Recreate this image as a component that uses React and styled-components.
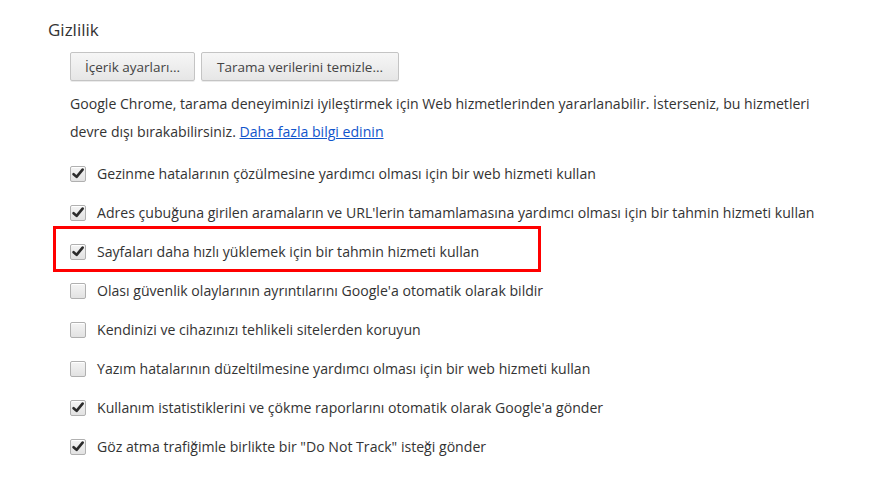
import React from "react";
import styled, { createGlobalStyle } from "styled-components";

const Global = createGlobalStyle`
  html, body { margin: 0; padding: 0; background: #fff; }
  body { font-family: "Open Sans", "Noto Sans", sans-serif; color: #333; }
`;

const Page = styled.div`
  width: 876px;
  height: 478px;
  box-sizing: border-box;
  padding: 18px 0 0 48px;
  background: #fff;
`;

const Heading = styled.h3`
  margin: 0;
  font-size: 17px;
  font-weight: 400;
  color: #333;
  line-height: 24px;
`;

const Body = styled.div`
  padding-left: 22px;
  display: flex;
  flex-direction: column;
`;

const Buttons = styled.div`
  display: flex;
  gap: 6px;
  margin-top: 10px;
`;

const Button = styled.button`
  height: 29px;
  box-sizing: border-box;
  padding: 0 12px;
  font-family: inherit;
  font-size: 13.5px;
  color: #444;
  border: 1px solid #c4c4c4;
  border-radius: 2px;
  background: linear-gradient(#f6f6f6, #e6e6e6);
  box-shadow: 0 1px 0 rgba(0,0,0,0.08);
  width: ${p => p.$w}px;
`;

const Para = styled.p`
  margin: 9px 0 0 0;
  font-size: 14.1px;
  line-height: 28px;
  color: #333;
  white-space: nowrap;
`;

const Line = styled.span`
  display: block;
`;

const Link = styled.a`
  color: #15c;
  text-decoration: underline;
`;

const List = styled.div`
  display: flex;
  flex-direction: column;
  margin-top: 8px;
`;

const Row = styled.div`
  position: relative;
  display: flex;
  align-items: center;
  height: 39px;
  gap: 11px;
  font-size: 14.1px;
  color: #333;
  white-space: nowrap;
`;

const Highlight = styled.div`
  position: absolute;
  left: -17px;
  top: -6px;
  width: 488px;
  height: 46px;
  box-sizing: border-box;
  border: 3px solid #f00;
  pointer-events: none;
`;

const Box = styled.span`
  width: 16px;
  height: 16px;
  box-sizing: border-box;
  border: 1px solid #b0b0b0;
  border-radius: 2px;
  background: linear-gradient(#f4f4f4, #e2e2e2);
  box-shadow: inset 0 1px 0 #fff;
  display: flex;
  align-items: center;
  justify-content: center;
  flex: none;
`;

const Check = () => (
  <svg width="12" height="11" viewBox="0 0 12 11">
    <path d="M1.6 6.2 L4.6 8.9 L10.6 1.6" stroke="#2b2b2b" strokeWidth="2.6" fill="none" strokeLinejoin="round" strokeLinecap="round" />
  </svg>
);

const Checkbox = ({ checked }) => <Box>{checked ? <Check /> : null}</Box>;

const items = [
  { t: "Gezinme hatalarının çözülmesine yardımcı olması için bir web hizmeti kullan", c: true },
  { t: "Adres çubuğuna girilen aramaların ve URL'lerin tamamlamasına yardımcı olması için bir tahmin hizmeti kullan", c: true },
  { t: "Sayfaları daha hızlı yüklemek için bir tahmin hizmeti kullan", c: true, h: true },
  { t: "Olası güvenlik olaylarının ayrıntılarını Google'a otomatik olarak bildir", c: false },
  { t: "Kendinizi ve cihazınızı tehlikeli sitelerden koruyun", c: false },
  { t: "Yazım hatalarının düzeltilmesine yardımcı olması için bir web hizmeti kullan", c: false },
  { t: "Kullanım istatistiklerini ve çökme raporlarını otomatik olarak Google'a gönder", c: true },
  { t: "Göz atma trafiğimle birlikte bir \"Do Not Track\" isteği gönder", c: true },
];

export default function App() {
  return (
    <>
      <Global />
      <Page>
        <Heading>Gizlilik</Heading>
        <Body>
          <Buttons>
            <Button $w={125}>İçerik ayarları...</Button>
            <Button $w={198}>Tarama verilerini temizle...</Button>
          </Buttons>
          <Para>
            <Line>Google Chrome, tarama deneyiminizi iyileştirmek için Web hizmetlerinden yararlanabilir. İsterseniz, bu hizmetleri</Line>
            <Line>devre dışı bırakabilirsiniz. <Link href="#">Daha fazla bilgi edinin</Link></Line>
          </Para>
          <List>
            {items.map((it, i) => (
              <Row key={i}>
                {it.h ? <Highlight /> : null}
                <Checkbox checked={it.c} />
                {it.t}
              </Row>
            ))}
          </List>
        </Body>
      </Page>
    </>
  );
}
